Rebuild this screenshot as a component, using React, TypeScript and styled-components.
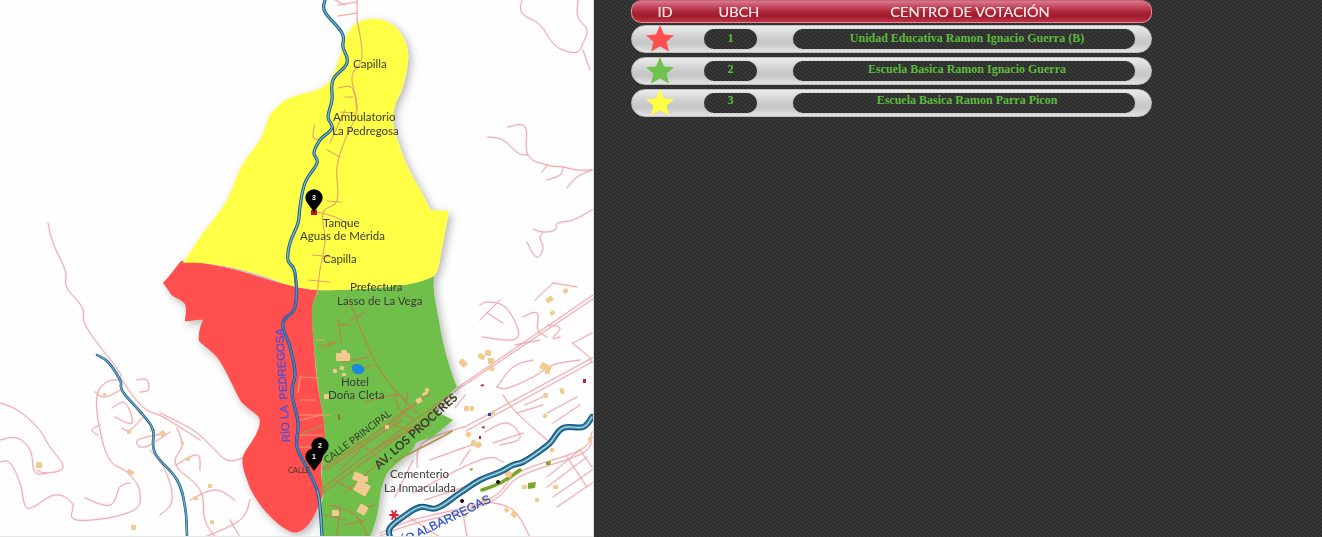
import React from "react";
import styled, { createGlobalStyle, css } from "styled-components";

const Global = createGlobalStyle`
  html, body { margin: 0; padding: 0; background: #2e2e2e; overflow: hidden; }
  #root { width: 1322px; height: 537px; }
`;

const carbon = css`
  background-color: #2c2c2c;
  background-image: linear-gradient(
    45deg,
    #3a3a3a 25%,
    #2b2b2b 25%,
    #2b2b2b 50%,
    #3a3a3a 50%,
    #3a3a3a 75%,
    #2b2b2b 75%
  );
  background-size: 4px 4px;
`;

const Page = styled.div`
  display: flex;
  width: 1322px;
  height: 537px;
  overflow: hidden;
`;
const MapPanel = styled.div`
  flex: 0 0 594px;
  height: 537px;
  background: #fefefe;
  border-right: 1px solid #d8d8d8;
  border-bottom: 1px solid #e6e6e6;
  box-sizing: border-box;
`;
const MapSvg = styled.svg`
  display: block;
  width: 593px;
  height: 536px;
`;
const BlurGroup = styled.g`
  filter: blur(0.35px);
`;
const SidePanel = styled.div`
  ${carbon}
  flex: 1;
  padding: 0 170px 0 37px;
  display: flex;
  flex-direction: column;
  gap: 2px;
`;
const RowList = styled.div`
  display: flex;
  flex-direction: column;
  gap: 4px;
`;
const HeaderBar = styled.div`
  display: flex;
  align-items: center;
  width: 521px;
  height: 23px;
  box-sizing: border-box;
  border: 1px solid #e48c9c;
  border-top-color: #c86478;
  border-radius: 10px;
  background: linear-gradient(#d9798c 0%, #c64c62 25%, #ab2537 52%, #9f1c2c 72%, #c23348 100%);
  color: #f2e4e4;
  font-family: Lato, "Liberation Sans", sans-serif;
  font-size: 13px;
  line-height: 20px;
  filter: blur(0.3px);
`;
const HeadCell = styled.span<{ $w: number }>`
  flex: 0 0 ${(p) => p.$w}px;
  text-align: center;
  transform: scaleX(1.12);
  text-shadow: 0 0 0.6px #f2e4e4;
`;
const Row = styled.div`
  display: flex;
  align-items: center;
  width: 521px;
  height: 28px;
  box-sizing: border-box;
  border: 1px solid #bdbdbd;
  border-radius: 14px;
  background: linear-gradient(#ececec 0%, #dedede 22%, #cbcbcb 50%, #c6c6c6 68%, #e4e4e4 100%);
`;
const StarCell = styled.div`
  flex: 0 0 56px;
  display: flex;
  justify-content: center;
  align-self: flex-start;
  margin-top: -1px;
`;
const Pill = styled.div<{ $w: number; $ml: number; $lift: number; $pad?: number }>`
  ${carbon}
  flex: 0 0 ${(p) => p.$w}px;
  margin-left: ${(p) => p.$ml}px;
  height: 20px;
  box-sizing: border-box;
  padding-left: ${(p) => p.$pad ?? 0}px;
  padding-bottom: ${(p) => p.$lift}px;
  border-radius: 10px;
  text-align: center;
  color: #5dba3c;
  font-family: "Liberation Serif", serif;
  font-weight: 700;
  font-size: 12px;
  line-height: ${(p) => 20 - p.$lift}px;
  box-shadow: 0 0 1px #8a8a8a;
`;

const Stroke = styled.path<{ $c: string; $w: number; $o?: number }>`
  fill: none;
  stroke: ${(p) => p.$c};
  stroke-width: ${(p) => p.$w};
  stroke-opacity: ${(p) => p.$o ?? 1};
  stroke-linejoin: round;
  stroke-linecap: round;
`;
const Area = styled.path<{ $c: string }>`
  fill: ${(p) => p.$c};
`;
const Building = styled.rect`
  fill: #f2c98e;
`;
const Label = styled.text`
  font-family: Lato, "Liberation Sans", sans-serif;
  font-size: 11.5px;
  fill: #3c3c38;
`;
const StreetLabel = styled.text<{ $size: number; $bold?: boolean }>`
  font-family: Lato, "Liberation Sans", sans-serif;
  font-size: ${(p) => p.$size}px;
  font-weight: ${(p) => (p.$bold ? 700 : 400)};
  fill: #343a2c;
`;
const RiverLabel = styled.text<{ $c: string; $size: number }>`
  font-family: "Liberation Sans", sans-serif;
  font-size: ${(p) => p.$size}px;
  fill: ${(p) => p.$c};
  stroke: ${(p) => p.$c};
  stroke-width: 0.25px;
`;
const PinNumber = styled.text`
  font-family: "Liberation Sans", sans-serif;
  font-size: 7px;
  font-weight: 700;
  fill: #fff;
  text-anchor: middle;
`;

// Smooth a list of "x,y" points into a Catmull-Rom style curve.
const spline = (points: string) => {
  const p = points.split(" ").map((s) => s.split(",").map(Number));
  let d = `M${p[0][0]} ${p[0][1]}`;
  for (let i = 0; i < p.length - 1; i++) {
    const a = p[Math.max(i - 1, 0)];
    const b = p[i];
    const c = p[i + 1];
    const e = p[Math.min(i + 2, p.length - 1)];
    const k = 5;
    d += ` C${b[0] + (c[0] - a[0]) / k} ${b[1] + (c[1] - a[1]) / k} ${c[0] - (e[0] - b[0]) / k} ${c[1] - (e[1] - b[1]) / k} ${c[0]} ${c[1]}`;
  }
  return d;
};

const Road = ({ points, c, w, o }: { points: string; c: string; w: number; o?: number }) => (
  <Stroke d={spline(points)} $c={c} $w={w} $o={o} />
);

const pinkRoads = [
  "48,223 53,243 65,270 67,288 82,307 87,328 118,370 122,380 143,407 165,418 200,440",
  "160,413 193,430 210,445 227,460 243,458",
  "0,403 17,410 37,427 50,447 63,467 47,473 37,470",
  "0,440 17,438 30,450 35,472 47,473",
  "0,462 10,463 20,483 25,505 33,507 55,495 72,503 77,520 130,512 140,493 128,473 110,460 100,430 97,397 107,382 122,380",
  "85,498 110,505 120,487 130,483",
  "95,392 105,397 120,390",
  "112,408 125,403 132,423 115,417",
  "143,417 130,430 122,428",
  "165,433 138,440 145,447 170,432",
  "177,428 182,445 176,465 200,490 205,520 215,537",
  "176,465 197,455 200,470",
  "190,500 215,490 235,500",
  "150,450 165,470 172,500 160,515",
  "100,425 92,430 98,435",
  "137,380 147,380 148,390 140,392",
  "205,537 240,520 250,500",
  "230,520 240,537",
  "522,0 522,13 540,25 552,42 563,50 577,52 583,43 587,30 578,17 578,0",
  "583,50 590,70",
  "508,127 525,127 528,155 547,165 563,167 577,170 592,170",
  "488,137 503,140 518,153 528,155",
  "547,180 560,175 563,167",
  "567,188 577,177 592,170",
  "542,172 547,165",
  "592,210 573,220 558,223 555,230 543,232 533,229",
  "543,232 540,238 543,248 538,257 532,252 527,242",
  "335,0 345,5",
  "338,5 357,2",
  "338,16 357,13",
  "357,0 357,19",
  "457,388 593,295",
  "454,392 593,299",
  "480,305 490,302 508,310 517,338 482,337",
  "487,313 503,323",
  "523,317 537,313 538,330 547,337",
  "553,283 577,287",
  "548,325 560,328 553,338 560,337",
  "573,343 592,333",
  "572,343 587,355 592,362",
  "463,428 592,358",
  "466,431 592,362",
  "497,387 508,388 533,377 553,365 580,360",
  "497,387 513,367 533,360",
  "503,395 517,413 547,440",
  "525,405 547,395",
  "517,413 543,405",
  "547,413 577,397",
  "553,423 580,405",
  "493,443 523,433",
  "485,432 507,423 520,438 500,445",
  "455,408 465,395",
  "417,467 423,443 463,427",
  "430,460 463,448 480,443",
  "413,493 480,460 503,462",
  "395,497 413,460",
  "460,465 470,450",
  "380,533 413,520 487,500 520,472 580,450 592,432",
  "380,536 413,524 488,503 521,476 581,454 592,437",
  "547,477 580,450",
  "547,487 587,457",
  "553,497 592,470",
  "557,507 592,483",
  "580,450 592,467",
  "567,457 587,487",
  "463,513 467,537",
  "487,502 513,510 530,537",
  "425,500 470,485",
  "405,515 440,537",
  "480,320 500,300",
  "535,300 553,283",
  "515,345 540,340",
];

const orangeRoads = [
  "357,19 362,57 352,77 357,110 345,140 337,167 337,200 323,213 325,240 320,270 317,295",
  "338,88 352,88 357,110",
  "345,97 353,97",
  "340,112 355,113",
  "330,143 345,110",
  "327,150 340,157",
  "315,125 313,137 320,140",
  "327,201 341,202",
  "317,212 335,217 350,225",
  "312,255 333,257",
  "308,280 330,282",
  "325,340 315,340",
  "315,400 300,400",
  "300,420 322,415",
  "300,435 322,435",
  "298,447 325,447",
  "300,415 330,415",
  "300,378 298,393",
  "300,377 318,378",
];

const tanRoads = [
  "350,303 380,370 417,413",
  "338,320 341,342",
  "350,320 360,315 365,313",
  "340,325 350,325",
  "318,347 335,342 327,347",
  "343,362 370,357",
  "353,372 372,365",
  "365,402 395,395 405,400",
  "395,395 400,410 415,420",
  "380,430 398,415 415,405",
  "408,392 405,410",
  "320,490 380,445 450,395",
  "323,493 382,449 453,398",
  "323,468 400,417",
  "325,470 402,420",
  "400,417 420,400 430,395",
  "375,450 400,435 430,425",
  "392,425 410,430",
  "345,492 380,462",
  "330,505 355,515 368,537",
  "325,515 345,520",
  "340,505 337,535",
  "355,440 385,462",
  "360,450 340,470",
  "335,480 352,490",
  "360,510 375,505",
  "345,525 365,520",
  "303,433 322,425",
  "393,462 440,438 452,431",
];

const buildings: [number, number, number, number, number][] = [
  [336, 353, 14, 8, 0], [341, 350, 6, 5, 0], [324, 394, 6, 5, 0],
  [340, 366, 4, 4, 20], [333, 369, 4, 4, 10], [342, 373, 4, 3, 0],
  [416, 398, 6, 5, -30], [422, 392, 6, 3, -30], [385, 425, 4, 4, 0],
  [355, 482, 14, 12, 30], [360, 476, 8, 6, 0], [358, 505, 9, 9, 30],
  [332, 510, 7, 6, 0], [353, 473, 10, 8, 20],
  [459, 360, 8, 6, 45], [478, 354, 7, 5, 30], [485, 350, 6, 6, 10],
  [488, 358, 6, 6, 0], [490, 367, 4, 4, 30], [486, 367, 4, 3, 0],
  [546, 297, 7, 5, -30], [550, 311, 5, 4, -30], [563, 289, 5, 4, -30],
  [540, 364, 11, 7, 30], [560, 388, 4, 6, -20], [546, 369, 4, 5, 10],
  [464, 406, 5, 5, 0], [470, 406, 4, 5, 0], [490, 411, 5, 4, -20],
  [466, 432, 5, 5, 20], [471, 440, 5, 6, 20], [476, 442, 5, 6, 45],
  [543, 393, 5, 5, 20], [543, 414, 4, 4, 30], [522, 485, 5, 4, 0],
  [535, 498, 4, 4, 0], [505, 471, 7, 6, 30], [553, 485, 5, 4, 0],
  [550, 448, 4, 4, 0], [588, 437, 4, 4, 0], [545, 371, 3, 3, 0],
  [481, 497, 7, 7, 0], [470, 506, 8, 3, -30], [504, 508, 5, 4, 40],
  [511, 512, 6, 5, 45], [463, 514, 4, 3, 0], [36, 462, 6, 6, 0],
  [150, 428, 5, 4, 30], [127, 470, 7, 4, 30], [160, 431, 5, 5, -30],
  [139, 411, 4, 4, 0], [127, 430, 4, 4, 0], [181, 442, 3, 3, 0],
  [186, 457, 4, 4, 0], [103, 393, 3, 3, 0], [208, 484, 4, 4, 0],
  [131, 525, 5, 5, 0], [210, 520, 4, 4, 0], [194, 496, 4, 4, 0],
  [425, 388, 4, 4, -30], [384, 418, 2, 2, 0],
];

const pedregosa =
  "325,0 325,12 342,33 343,47 347,63 333,80 332,100 328,117 332,128 320,140 314,153 317,163 305,183 300,207 298,223 290,243 288,260 295,273 295,307 283,323 290,347 295,373 292,393 298,423 297,447 308,470 317,490 320,507 322,537";
const albarregas =
  "592,417 583,427 563,428 550,443 537,453 523,462 513,465 500,472 480,480 460,493 437,508 420,507 403,517 390,528 390,537";
const westRiver =
  "97,355 108,362 120,380 123,392 143,415 153,430 155,453 177,480 185,507 187,535";

const yellowArea =
  "M342 47 C345 38 349 30 354 25 C360 20 367 18 376 19 C385 19 394 24 400 32 C406 40 409 50 408 60 C407 72 405 80 401 92 C397 100 393 108 393 118 C393 128 396 136 401 150 C405 162 410 172 418 186 C424 196 428 206 431 210 L449 211 C446 226 443 244 440 258 C439 266 437 273 434 276 C420 283 405 285 395 286 C375 288 345 291 317 290 C305 289 295 287 285 284 C270 277 250 272 235 268 C215 264 198 262 183 263 C190 252 196 243 203 233 C212 221 220 212 227 200 C233 188 236 176 242 165 C248 155 255 148 261 138 C265 130 266 123 270 115 C277 105 285 99 295 96 C307 92 320 92 329 82 C335 72 340 58 342 47 Z";
const redArea =
  "M181 261 C200 262 222 266 240 271 C258 276 275 282 292 286 C300 288 310 290 318 290 C314 298 311 306 312 315 C312 330 314 345 315 360 C316 375 318 390 321 405 C324 420 325 430 325 440 C323 452 321 465 321 475 C322 483 324 490 322 497 C318 508 314 518 308 525 C303 531 297 534 291 532 C282 528 273 520 265 511 C256 500 250 490 247 480 C244 472 241 463 243 456 C247 447 254 440 257 432 C260 425 261 420 258 416 C251 410 244 406 240 400 C233 387 227 372 219 360 C212 350 204 347 199 341 C198 334 200 326 203 320 C196 319 190 322 185 321 C185 314 188 308 184 303 C179 298 173 298 170 293 C168 289 165 286 163 283 C170 276 175 268 181 261 Z";
const greenArea =
  "M318 290 C345 291 375 288 395 286 C410 285 425 281 434 276 C433 285 434 295 437 310 C440 325 441 335 445 350 C448 362 453 378 457 387 L433 410 L453 420 L433 437 C428 439 420 440 416 443 L413 449 C405 458 395 464 387 473 C384 480 381 487 380 495 C379 505 378 512 376 520 C374 526 372 532 370 537 L322 537 L320 510 C322 503 324 495 322 490 C321 480 322 465 323 455 C326 440 325 425 322 410 C319 395 317 380 316 365 C314 345 312 330 312 315 C311 306 314 298 318 290 Z";

const Pink = ({ points }: { points: string }) => (
  <>
    <Road points={points} c="#f6c4c4" w={2.4} o={0.3} />
    <Road points={points} c="#eb9da0" w={0.9} />
  </>
);

const River = ({ points, w }: { points: string; w: number }) => (
  <>
    <Road points={points} c="#125488" w={w} />
    <Road points={points} c="#3a84a8" w={w * 0.6} />
    <Road points={points} c="#b4dcd8" w={w * 0.2} />
  </>
);

const Pin = ({ cx, cy, n }: { cx: number; cy: number; n: string }) => (
  <g>
    <path
      d={`M${cx} ${cy + 14} L${cx - 6} ${cy + 6} A8.6 8.6 0 1 1 ${cx + 6} ${cy + 6} Z`}
      fill="#000"
    />
    <PinNumber x={cx} y={cy + 2}>{n}</PinNumber>
  </g>
);

const MapDrawing = () => (
  <MapSvg viewBox="0 0 593 536">
    <defs>
      <filter id="soft" x="-10%" y="-10%" width="125%" height="125%">
        <feDropShadow dx="3" dy="3" stdDeviation="4" floodColor="#000" floodOpacity="0.28" />
      </filter>
    </defs>
    <BlurGroup>
      {pinkRoads.map((p) => (
        <Pink key={p} points={p} />
      ))}
      <g filter="url(#soft)">
        <Area d={greenArea} $c="#70bf4b" />
        <Area d={redArea} $c="#ff5050" />
        <Area d={yellowArea} $c="#ffff44" />
      </g>
      {orangeRoads.map((p) => (
        <Road key={p} points={p} c="#eb9e6c" w={1.1} />
      ))}
      {tanRoads.map((p) => (
        <Road key={p} points={p} c="#ab8f48" w={1.5} />
      ))}
      <Road points="482,490 500,483 520,470" c="#7aa82c" w={3.5} />
      {buildings.map(([x, y, w, h, r]) => (
        <Building
          key={`${x}-${y}`}
          x={x}
          y={y}
          width={w}
          height={h}
          rx={1}
          transform={`rotate(${r} ${x + w / 2} ${y + h / 2})`}
        />
      ))}
      <Area d="M352 366 C355 363 360 364 362 366 C366 368 365 373 360 374 C355 375 351 371 352 366 Z" $c="#1e88e0" />
      <Area d="M528 483 L536 482 L535 488 L528 489 Z" $c="#76aa28" />
      <Area d="M546 462 L551 461 L550 465 L546 465 Z" $c="#76aa28" />
      <Area d="M469 469 L473 468 L472 471 Z" $c="#76aa28" />
      <Area d="M488 413 L491 413 L491 416 L488 416 Z" $c="#2048b0" />
      <Area d="M480 385 L484 384 L483 387 Z" $c="#b02030" />
      <Area d="M481 427 L485 426 L484 429 Z" $c="#c02030" />
      <Area d="M479 436 L481 436 L481 439 L479 439 Z" $c="#a02040" />
      <Area d="M583 379 L586 379 L586 383 L583 383 Z" $c="#c02030" />
      <Area d="M498 480 a2 2 0 1 0 .1 0 Z M462 499 a2 2 0 1 0 .1 0 Z" $c="#201010" />
      <Area d="M338 415 L339 414 L340 419 L339 420 Z" $c="#c03020" />
      <Area d="M311 210 L317 210 L317 215 L311 215 Z" $c="#c01020" />
      <Road points="390,515 398,515" c="#e02030" w={1.8} />
      <Road points="392,511 396,519" c="#e02030" w={1.8} />
      <Road points="396,511 392,519" c="#e02030" w={1.8} />
      <River points={pedregosa} w={3.2} />
      <Road points="295,273 295,307 283,323 290,347 295,373 292,393 298,423 297,447 308,470 317,490" c="#3c5fc0" w={1.4} o={0.8} />
      <River points={albarregas} w={6} />
      <River points={westRiver} w={2.6} />
      <Label x={353} y={68}>Capilla</Label>
      <Label x={333} y={121}>Ambulatorio</Label>
      <Label x={332} y={134.5}>La Pedregosa</Label>
      <Label x={323} y={226.5}>Tanque</Label>
      <Label x={300} y={240}>Aguas de Mérida</Label>
      <Label x={323} y={263}>Capilla</Label>
      <Label x={350} y={291}>Prefectura</Label>
      <Label x={337} y={304.5}>Lasso de La Vega</Label>
      <Label x={341} y={386}>Hotel</Label>
      <Label x={328} y={399}>Doña Cleta</Label>
      <Label x={390} y={478}>Cementerio</Label>
      <Label x={384} y={491.5}>La Inmaculada</Label>
      <RiverLabel $c="#4a4fdc" $size={11.3} transform="translate(290 442) rotate(-93.5)" xmlSpace="preserve">
        RÍO LA  PEDREGOSA
      </RiverLabel>
      <RiverLabel $c="#2a50c8" $size={12} transform="translate(397 548) rotate(-26)">
        RÍO ALBARREGAS
      </RiverLabel>
      <StreetLabel $size={10} transform="translate(327 464) rotate(-37)">CALLE PRINCIPAL</StreetLabel>
      <StreetLabel $size={12} $bold transform="translate(379 470) rotate(-42)">AV. LOS PROCERES</StreetLabel>
      <StreetLabel $size={7.5} x={288} y={473}>CALLE</StreetLabel>
      <Pin cx={320} cy={446} n="2" />
      <Pin cx={314} cy={457} n="1" />
      <Pin cx={314} cy={198} n="3" />
    </BlurGroup>
  </MapSvg>
);

const StarIcon = ({ color }: { color: string }) => (
  <svg width="30" height="27" viewBox="0 0 30 27">
    <polygon
      points="15,0 19,9.4 29,10.2 21.5,16.8 24,26.5 15,21.3 6,26.5 8.5,16.8 1,10.2 11,9.4"
      fill={color}
    />
  </svg>
);

const rows = [
  { id: "1", color: "#ff5050", name: "Unidad Educativa Ramon Ignacio Guerra (B)", lift: 2 },
  { id: "2", color: "#70c24e", name: "Escuela Basica Ramon Ignacio Guerra", lift: 4 },
  { id: "3", color: "#ffff44", name: "Escuela Basica Ramon Parra Picon", lift: 6 },
];

export default function App() {
  return (
    <Page>
      <Global />
      <MapPanel>
        <MapDrawing />
      </MapPanel>
      <SidePanel>
        <HeaderBar>
          <HeadCell $w={66}>ID</HeadCell>
          <HeadCell $w={82}>UBCH</HeadCell>
          <HeadCell $w={380}>CENTRO DE VOTACIÓN</HeadCell>
        </HeaderBar>
        <RowList>
          {rows.map((r) => (
            <Row key={r.id}>
              <StarCell>
                <StarIcon color={r.color} />
              </StarCell>
              <Pill $w={53} $ml={16} $lift={r.lift}>{r.id}</Pill>
              <Pill $w={342} $ml={36} $lift={r.lift} $pad={6}>{r.name}</Pill>
            </Row>
          ))}
        </RowList>
      </SidePanel>
    </Page>
  );
}
